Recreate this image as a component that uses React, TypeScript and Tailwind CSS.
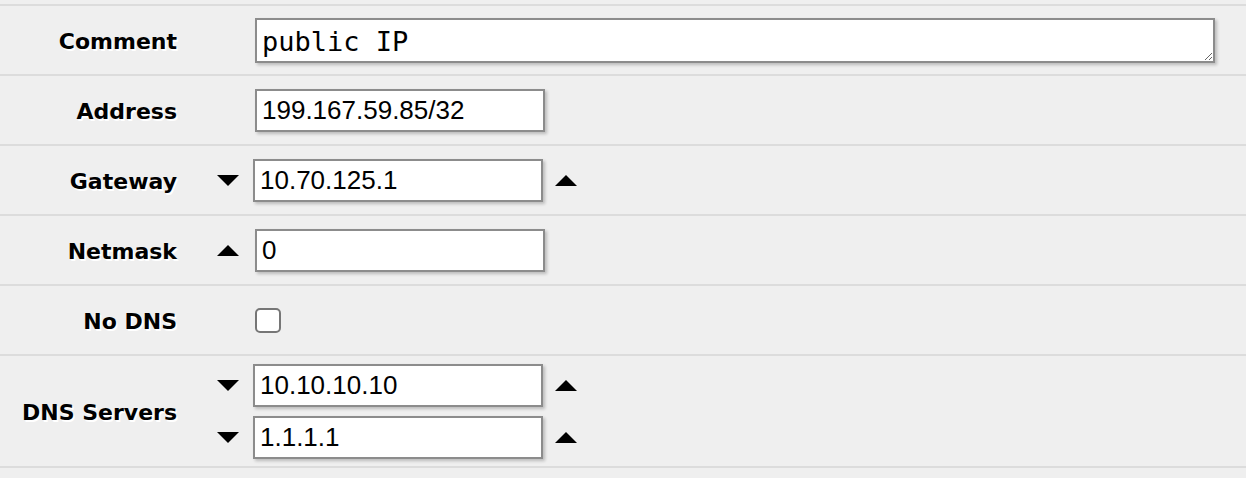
import React from "react";

const labelCls =
  "w-[177px] shrink-0 pt-[4px] text-right text-[22px] font-bold text-black [font-family:'DejaVu_Sans',Verdana,sans-serif] [text-shadow:1.5px_1.5px_0_#ffffff] leading-none";

const inputCls =
  "h-[43px] w-[290px] border-2 border-[#8c8c8c] bg-white pl-[5px] text-[26px] text-black [font-family:'Liberation_Sans',Arial,sans-serif] shadow-[2px_2px_3px_rgba(0,0,0,0.22)] outline-none";

function Down() {
  return (
    <svg width="22" height="11" viewBox="0 0 22 11" className="block">
      <polygon points="0,0 22,0 11,11" fill="#000" />
    </svg>
  );
}

function Up() {
  return (
    <svg width="22" height="11" viewBox="0 0 22 11" className="block">
      <polygon points="0,11 22,11 11,0" fill="#000" />
    </svg>
  );
}

function Row({
  label,
  h = "h-[70px]",
  children,
}: {
  label: string;
  h?: string;
  children: React.ReactNode;
}) {
  return (
    <div className={`flex items-center border-b-2 border-[#dcdcdc] ${h}`}>
      <div className={labelCls}>{label}</div>
      <div className="flex items-center pl-[40px]">{children}</div>
    </div>
  );
}

function ArrowInput({
  value,
  left,
  right,
}: {
  value: string;
  left?: "down" | "up";
  right?: boolean;
}) {
  return (
    <div className="flex items-center">
      <div className={left === "down" ? "w-[36px]" : "w-[38px]"}>
        {left === "down" ? <Down /> : left === "up" ? <Up /> : null}
      </div>
      <input className={inputCls} defaultValue={value} />
      {right ? (
        <div className="ml-[12px]">
          <Up />
        </div>
      ) : null}
    </div>
  );
}

export default function App() {
  return (
    <div className="h-[478px] w-[1246px] overflow-hidden bg-[#efefef] pt-[4px]">
      <div className="border-t-2 border-[#dcdcdc]">
        <Row label="Comment">
          <div className="w-[38px]" />
          <textarea
            className="block h-[45px] w-[960px] resize-y border-2 border-[#8c8c8c] bg-white pl-[5px] pt-[6px] text-[27px] leading-[1.2] text-black [font-family:'DejaVu_Sans_Mono',Menlo,monospace] shadow-[2px_2px_3px_rgba(0,0,0,0.22)] outline-none"
            defaultValue="public IP"
            rows={1}
          />
        </Row>
        <Row label="Address">
          <ArrowInput value="199.167.59.85/32" />
        </Row>
        <Row label="Gateway">
          <ArrowInput value="10.70.125.1" left="down" right />
        </Row>
        <Row label="Netmask">
          <ArrowInput value="0" left="up" />
        </Row>
        <Row label="No DNS">
          <div className="w-[38px]" />
          <div className="h-[25px] w-[26px] rounded-[5px] border-2 border-[#767676] bg-white" />
        </Row>
        <Row label="DNS Servers" h="h-[112px]">
          <div className="flex flex-col gap-[9px]">
            <ArrowInput value="10.10.10.10" left="down" right />
            <ArrowInput value="1.1.1.1" left="down" right />
          </div>
        </Row>
      </div>
    </div>
  );
}
